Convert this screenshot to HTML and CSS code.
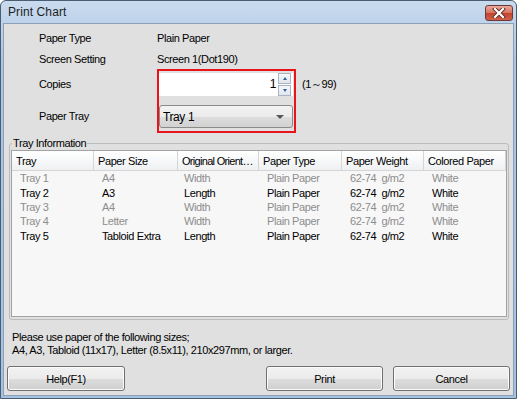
FILE: index.html
```html
<!DOCTYPE html>
<html>
<head>
    <title>Print Chart</title>
    <link rel="stylesheet" href="styles.css">
</head>
<body>
    <div class="window">
        <div class="titlebar">
            <span class="title">Print Chart</span>
            <div class="close-btn">
                <svg width="14" height="10" viewBox="0 0 14 10">
                    <path d="M3 1 L11 9 M11 1 L3 9" stroke="#5a2a22" stroke-width="4" stroke-linecap="square"/>
                    <path d="M3 1 L11 9 M11 1 L3 9" stroke="#fff" stroke-width="2.2" stroke-linecap="square"/>
                </svg>
            </div>
        </div>

        <div class="content">
            <div class="settings">
                <div class="label row-type">Paper Type</div>
                <div class="value row-type">Plain Paper</div>
                <div class="label row-screen">Screen Setting</div>
                <div class="value row-screen">Screen 1(Dot190)</div>
                <div class="label row-copies">Copies</div>
                <div class="label row-tray">Paper Tray</div>
                <div class="highlight">
                    <div class="spin">
                        <div class="spin-field">1</div>
                        <div class="spin-buttons">
                            <div class="spin-up"></div>
                            <div class="spin-down"></div>
                        </div>
                    </div>
                    <div class="combo">
                        <span>Tray 1</span>
                        <span class="combo-arrow"></span>
                    </div>
                </div>
                <div class="range">(1～99)</div>
            </div>

            <fieldset class="group">
                <legend>Tray Information</legend>
                <div class="list">
                    <table class="trays">
                        <colgroup>
                            <col class="c1">
                            <col class="c2">
                            <col class="c3">
                            <col class="c4">
                            <col class="c5">
                            <col>
                        </colgroup>
                        <thead>
                            <tr>
                                <th>Tray</th>
                                <th>Paper Size</th>
                                <th class="th-short">Original Orient…</th>
                                <th>Paper Type</th>
                                <th>Paper Weight</th>
                                <th>Colored Paper</th>
                            </tr>
                        </thead>
                        <tbody>
                            <tr class="off">
                                <td>Tray 1</td><td>A4</td><td>Width</td><td>Plain Paper</td><td>62-74&nbsp; g/m2</td><td>White</td>
                            </tr>
                            <tr>
                                <td>Tray 2</td><td>A3</td><td>Length</td><td>Plain Paper</td><td>62-74&nbsp; g/m2</td><td>White</td>
                            </tr>
                            <tr class="off">
                                <td>Tray 3</td><td>A4</td><td>Width</td><td>Plain Paper</td><td>62-74&nbsp; g/m2</td><td>White</td>
                            </tr>
                            <tr class="off">
                                <td>Tray 4</td><td>Letter</td><td>Width</td><td>Plain Paper</td><td>62-74&nbsp; g/m2</td><td>White</td>
                            </tr>
                            <tr>
                                <td>Tray 5</td><td>Tabloid Extra</td><td>Length</td><td>Plain Paper</td><td>62-74&nbsp; g/m2</td><td>White</td>
                            </tr>
                        </tbody>
                    </table>
                </div>
            </fieldset>

            <div class="note">
                Please use paper of the following sizes;<br>
                A4, A3, Tabloid (11x17), Letter (8.5x11), 210x297mm, or larger.
            </div>

            <div class="buttons">
                <div class="btn btn-help">Help(F1)</div>
                <div class="btn">Print</div>
                <div class="btn">Cancel</div>
            </div>
        </div>
    </div>
</body>
</html>
```

FILE: styles.css
```css
body {
    margin: 0;
    padding: 0;
    background-color: #fff;
    font-family: "Liberation Sans", Arial, sans-serif;
    font-size: 11px;
    letter-spacing: -0.4px;
    color: #000;
}

.window {
    width: 517px;
    height: 399px;
    box-sizing: border-box;
    border: 1px solid #4b5d72;
    border-radius: 6px 6px 0 0;
    background: linear-gradient(#c9dbee, #aac6e4 60px, #a6c2e2);
    padding: 0 2px 2px 2px;
    display: flex;
    flex-direction: column;
}

.titlebar {
    height: 22px;
    display: flex;
    align-items: center;
    justify-content: space-between;
    padding-left: 5px;
    padding-right: 1px;
}

.title {
    font-size: 12px;
    color: #1e1e1e;
    letter-spacing: 0.1px;
}

.close-btn {
    width: 26px;
    height: 14px;
    border: 1px solid #6a3a3a;
    border-radius: 3px;
    background: linear-gradient(#e9a99b, #d7725f 50%, #c3432c 51%, #d0614a);
    display: flex;
    align-items: center;
    justify-content: center;
    margin-top: 2px;
}

.content {
    flex: 1;
    background-color: #e0e0e0;
    border: 1px solid #8c9fb5;
    padding: 0 3px 2px 3px;
    display: flex;
    flex-direction: column;
}

/* top settings */

.settings {
    display: grid;
    grid-template-columns: 118px 139px auto;
    grid-template-rows: 20px 21px 30px 34px;
    margin-left: 32px;
    margin-top: 4px;
}

.label,
.value {
    display: flex;
    align-items: center;
}

.label {
    grid-column: 1;
}

.value {
    grid-column: 2 / 4;
}

.row-type {
    grid-row: 1;
}

.row-screen {
    grid-row: 2;
}

.row-copies {
    grid-row: 3;
}

.row-tray {
    grid-row: 4;
}

.highlight {
    grid-row: 3 / 5;
    grid-column: 2;
    border: 2px solid #e8141c;
    padding: 2px 1px 3px 0;
    display: flex;
    flex-direction: column;
    gap: 9px;
}

.spin {
    display: flex;
    height: 23px;
    background-color: #fff;
    padding-right: 2px;
}

.spin-field {
    flex: 1;
    text-align: right;
    line-height: 23px;
    padding-right: 2px;
    font-size: 12px;
}

.spin-buttons {
    width: 13px;
    display: flex;
    flex-direction: column;
    justify-content: center;
    gap: 1px;
}

.spin-up,
.spin-down {
    height: 9px;
    border: 1px solid #a8b4c2;
    background: linear-gradient(#f6f8fa, #dfe6ee);
    position: relative;
}

.spin-up::after,
.spin-down::after {
    content: "";
    position: absolute;
    left: 4px;
    top: 3px;
    border-left: 2.5px solid transparent;
    border-right: 2.5px solid transparent;
}

.spin-up::after {
    border-bottom: 3px solid #2a5fa0;
}

.spin-down::after {
    border-top: 3px solid #2a5fa0;
}

.combo {
    height: 23px;
    box-sizing: border-box;
    border: 1px solid #8b8b8b;
    border-radius: 3px;
    background: linear-gradient(#f3f3f3, #ebebeb 50%, #dddddd 51%, #d2d2d2);
    display: flex;
    align-items: center;
    justify-content: space-between;
    padding: 0 8px 0 3px;
    font-size: 12px;
}

.combo-arrow {
    border-left: 4px solid transparent;
    border-right: 4px solid transparent;
    border-top: 4px solid #555;
}

.range {
    grid-row: 3;
    grid-column: 3;
    display: flex;
    align-items: center;
    padding-left: 6px;
}

/* tray information */

.group {
    margin: 4px 1px 0 2px;
    padding: 0 1px 2px 1px;
    border: 1px solid #bcbcbc;
    border-radius: 3px;
    min-width: 0;
}

.group legend {
    padding: 0 1px;
    margin-left: 1px;
    line-height: 12px;
    font-size: 11px;
}

.list {
    height: 165px;
    border: 1px solid #a3a3a3;
    background-color: #f7f7f7;
    margin-top: 1px;
    overflow: hidden;
}

.trays {
    border-collapse: separate;
    border-spacing: 0;
    table-layout: fixed;
    width: 100%;
}

.trays .c1 { width: 82px; }
.trays .c2 { width: 84px; }
.trays .c3 { width: 81px; }
.trays .c4 { width: 83px; }
.trays .c5 { width: 82px; }

.trays th {
    height: 20px;
    box-sizing: border-box;
    text-align: left;
    font-weight: normal;
    padding: 0 4px;
    background: linear-gradient(#ffffff, #f7f8f9 50%, #eef0f2);
    border-right: 1px solid #d5d5d5;
    border-bottom: 1px solid #d5d5d5;
    white-space: nowrap;
}

.trays th.th-short {
    padding: 0 2px 0 4px;
    letter-spacing: -0.7px;
}

.trays td {
    height: 14.4px;
    line-height: 14px;
    padding: 0 0 0 8px;
    white-space: nowrap;
    overflow: hidden;
    color: #000;
}

.trays td:nth-child(3) {
    padding-left: 6px;
}

.trays tr.off td {
    color: #8d8d8d;
}

/* bottom */

.note {
    margin: 11px 0 0 5px;
    line-height: 13px;
}

.buttons {
    display: flex;
    margin-top: 9px;
}

.btn {
    width: 117px;
    height: 25px;
    box-sizing: border-box;
    border: 1px solid #707070;
    border-radius: 3px;
    background: linear-gradient(#f2f2f2, #ebebeb 50%, #dddddd 51%, #cfcfcf);
    box-shadow: inset 0 0 0 1px #fbfbfb;
    display: flex;
    align-items: center;
    justify-content: center;
    margin-left: 10px;
}

.btn-help {
    margin-left: 0;
    margin-right: auto;
    width: 118px;
}
```
